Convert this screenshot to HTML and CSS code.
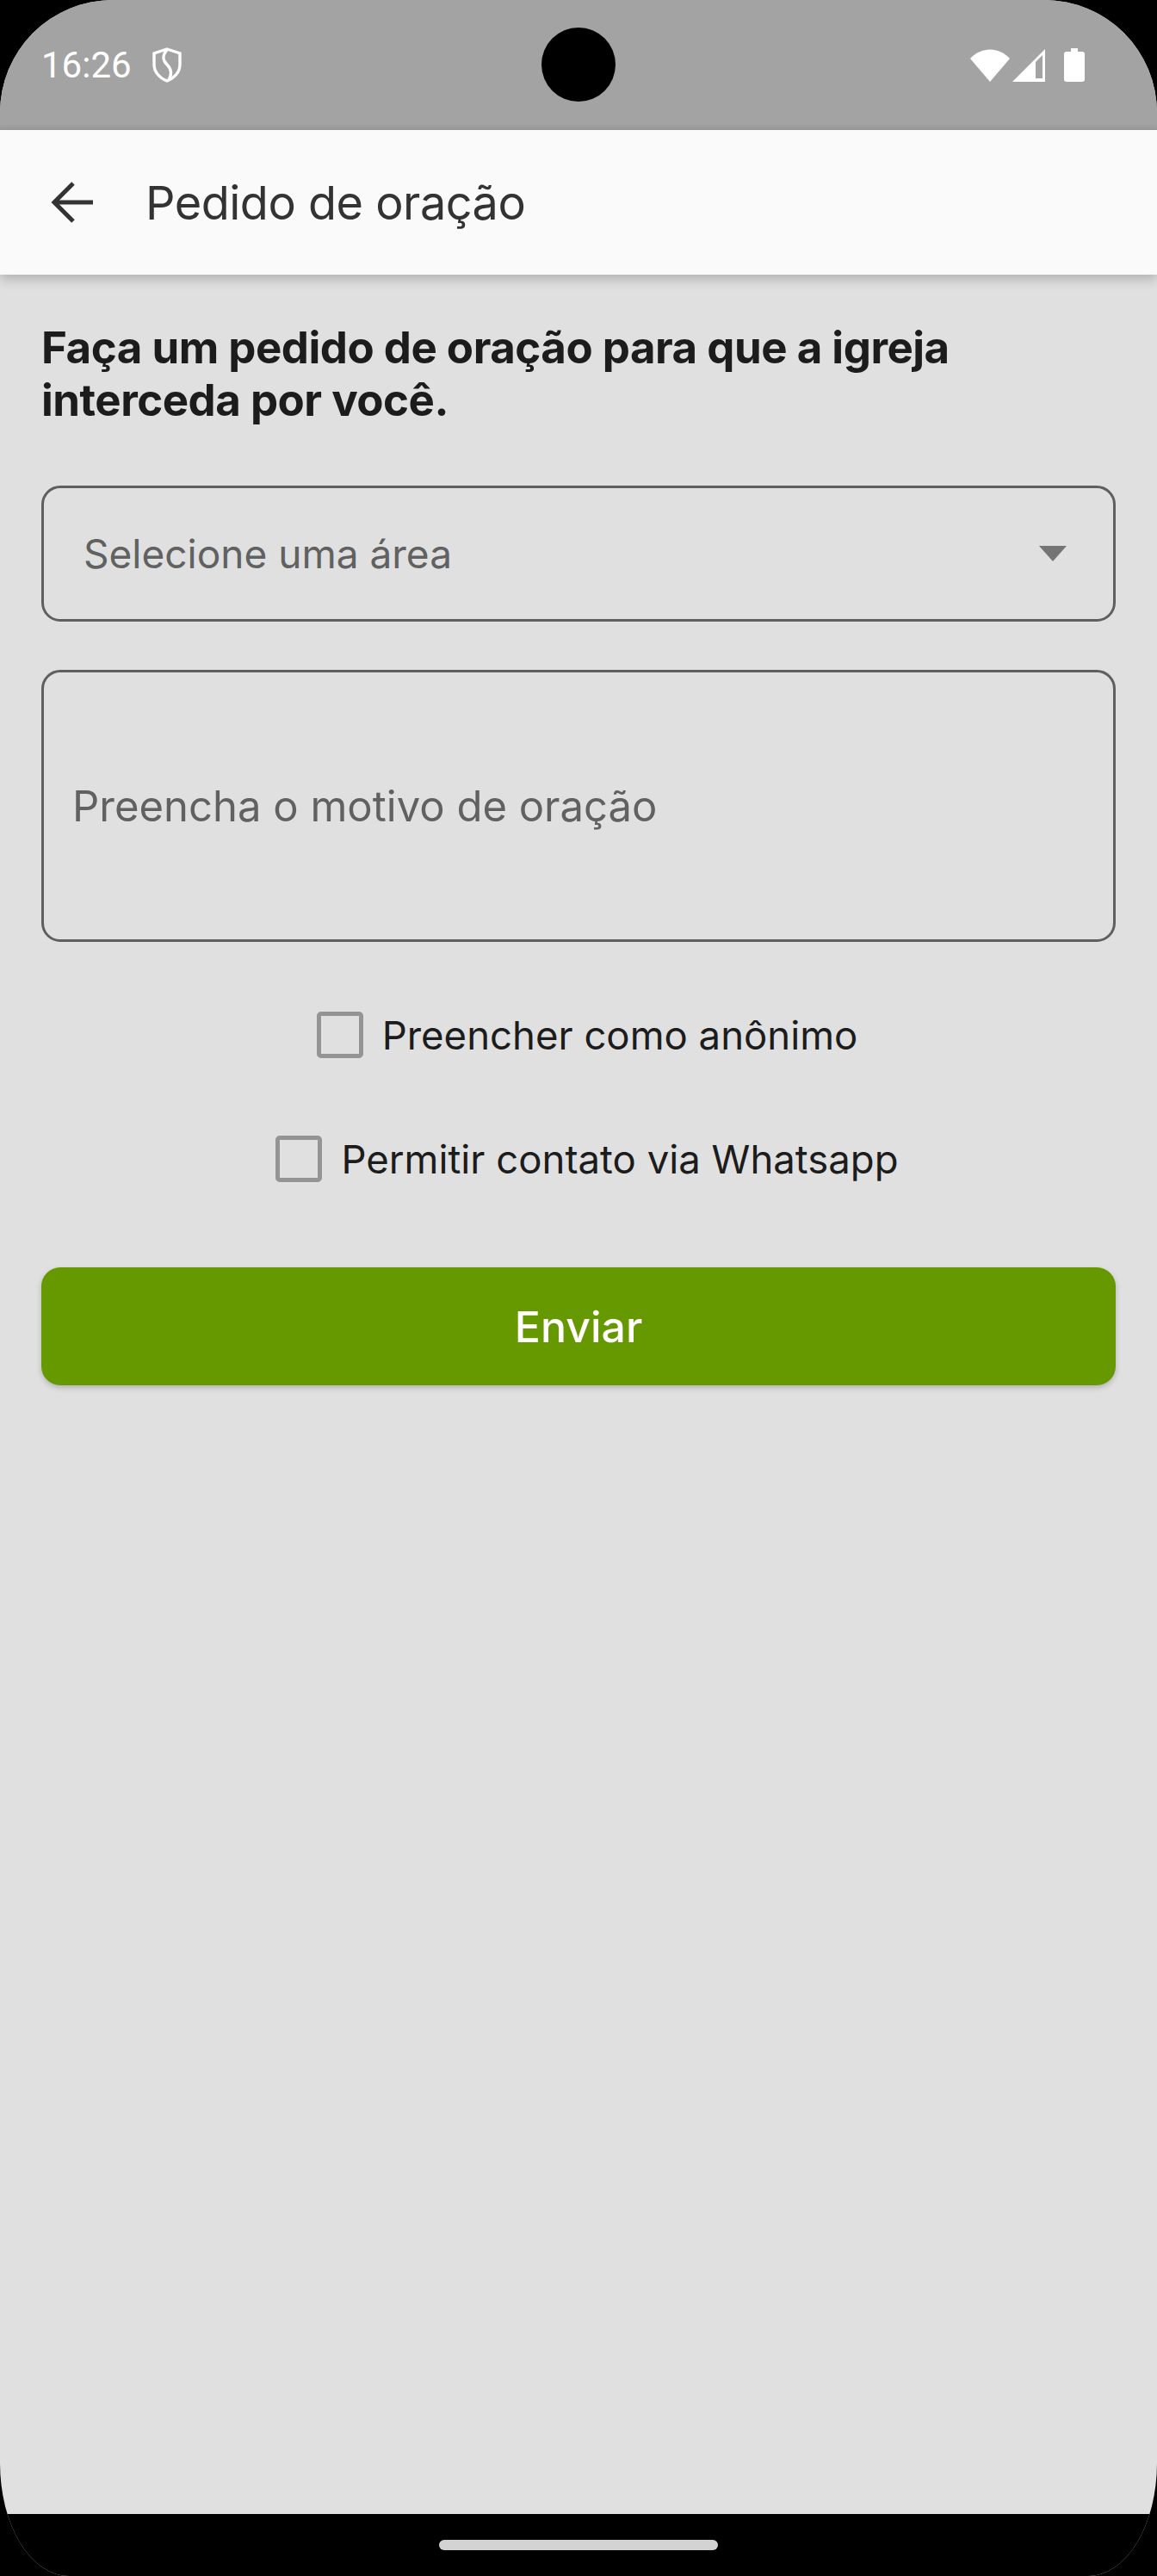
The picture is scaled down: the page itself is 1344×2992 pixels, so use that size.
FILE: index.html
```html
<!DOCTYPE html>
<html lang="pt-BR">
	<head>
		<meta charset="UTF-8" />
		<meta name="viewport" content="width=device-width, initial-scale=1.0" />
		<title>Pedido de oração</title>
		<link rel="stylesheet" href="styles.css">
	</head>
	<body>
		<div class="screen">
			<div class="status-bar">
				<div class="status-left">
					<span class="clock">16:26</span>
					<svg class="shield" width="34" height="41" viewBox="0 0 34 41" fill="none" stroke="#fff" stroke-width="3.4">
						<path d="M17 2 L32 7 V20 C32 29 25 36 17 39 C9 36 2 29 2 20 V7 Z" />
						<path d="M17 3 C11 10 12 15 17 20 C22 25 23 31 19 38" />
					</svg>
				</div>
				<div class="camera"></div>
				<div class="status-right">
					<svg class="wifi" width="46" height="38" viewBox="0 0 46 38" fill="#fff">
						<path d="M0 11 C13 -3 33 -3 46 11 L23 38 Z" />
					</svg>
					<svg class="signal" width="38" height="38" viewBox="0 0 38 38" fill="#fff">
						<path fill-rule="evenodd" d="M38 0 V38 H0 Z M35 7 L27 15 V34 H35 Z" />
					</svg>
					<svg class="battery" width="24" height="39" viewBox="0 0 24 39" fill="#fff">
						<path d="M8 0 H16 V4 H21 Q24 4 24 7 V36 Q24 39 21 39 H3 Q0 39 0 36 V7 Q0 4 3 4 H8 Z" />
					</svg>
				</div>
			</div>

			<header class="app-bar">
				<svg class="back" width="50" height="48" viewBox="0 0 50 48" fill="none" stroke="#333" stroke-width="5">
					<path d="M49 24 H4" />
					<path d="M26 2 L4 24 L26 46" />
				</svg>
				<h1>Pedido de oração</h1>
			</header>

			<main class="content">
				<h2>Faça um pedido de oração para que a igreja<br />interceda por você.</h2>

				<div class="field select-field">
					<span>Selecione uma área</span>
					<svg width="32" height="18" viewBox="0 0 32 18" fill="#757575">
						<path d="M0 0 H32 L16 18 Z" />
					</svg>
				</div>

				<div class="field text-field">Preencha o motivo de oração</div>

				<label class="check-row">
					<span class="box"></span>
					<span>Preencher como anônimo</span>
				</label>
				<label class="check-row second">
					<span class="box"></span>
					<span>Permitir contato via Whatsapp</span>
				</label>

				<button class="send" type="button">Enviar</button>
			</main>

			<div class="nav-bar"><div class="home-pill"></div></div>
		</div>
	</body>
</html>
```

FILE: styles.css
```css
body {
	margin: 0;
	background-color: #000;
	font-family: Inter, "Open Sans", sans-serif;
	color: #1c1c1c;
}

.screen {
	height: 2992px;
	display: flex;
	flex-direction: column;
	overflow: hidden;
	background-color: #e0e0e0;
	border-radius: 131px 131px 80px 80px / 131px 131px 131px 131px;
}

.status-bar {
	height: 151px;
	flex: none;
	display: flex;
	align-items: center;
	justify-content: space-between;
	box-sizing: border-box;
	padding: 0 84px 0 48px;
	position: relative;
	background: linear-gradient(#a3a3a3 144px, #9a9a9a);
}

.status-left,
.status-right {
	display: flex;
	align-items: center;
}

.clock {
	font-family: Roboto, sans-serif;
	font-size: 42px;
	color: #fff;
	margin-right: 24px;
}

.camera {
	position: absolute;
	left: 629px;
	top: 32px;
	width: 86px;
	height: 86px;
	border-radius: 50%;
	background-color: #000;
}

.signal {
	margin-left: 3px;
}

.battery {
	margin-left: 22px;
}

.app-bar {
	height: 168px;
	flex: none;
	display: flex;
	align-items: center;
	box-sizing: border-box;
	padding-left: 59px;
	background-color: #fafafa;
	box-shadow: 0 6px 12px rgba(0, 0, 0, 0.2);
	position: relative;
}

.app-bar h1 {
	margin: 0 0 0 60px;
	font-size: 54px;
	font-weight: 400;
	letter-spacing: -0.5px;
	color: #333;
}

.content {
	flex: 1;
	display: flex;
	flex-direction: column;
	padding: 54px 48px 0;
}

.content h2 {
	margin: 0 0 69px;
	font-size: 51px;
	line-height: 61px;
	font-weight: 700;
	letter-spacing: -0.5px;
}

.field {
	box-sizing: border-box;
	display: flex;
	align-items: center;
	border: 3px solid #5f5f5f;
	border-radius: 22px;
	font-size: 46px;
	color: #616161;
}

.select-field {
	height: 158px;
	justify-content: space-between;
	padding: 0 54px 0 46px;
	margin-bottom: 56px;
}

.text-field {
	height: 316px;
	padding-left: 33px;
	margin-bottom: 81px;
	font-size: 49px;
}

.check-row {
	display: flex;
	align-items: center;
	justify-content: center;
	padding-left: 20px;
	height: 54px;
	font-size: 45.5px;
}

.check-row.second {
	margin-top: 90px;
}

.box {
	box-sizing: border-box;
	width: 54px;
	height: 54px;
	margin-right: 22px;
	border: 5px solid #949494;
	border-radius: 5px;
}

.send {
	height: 137px;
	margin-top: 99px;
	border: none;
	border-radius: 22px;
	background-color: #669900;
	box-shadow: 0 3px 6px rgba(0, 0, 0, 0.2);
	font-family: inherit;
	font-size: 50px;
	font-weight: 500;
	color: #fff;
}

.nav-bar {
	height: 72px;
	flex: none;
	background-color: #000;
	position: relative;
}

.home-pill {
	position: absolute;
	left: 510px;
	top: 30px;
	width: 324px;
	height: 12px;
	border-radius: 6px;
	background-color: #d3d3d3;
}
```
